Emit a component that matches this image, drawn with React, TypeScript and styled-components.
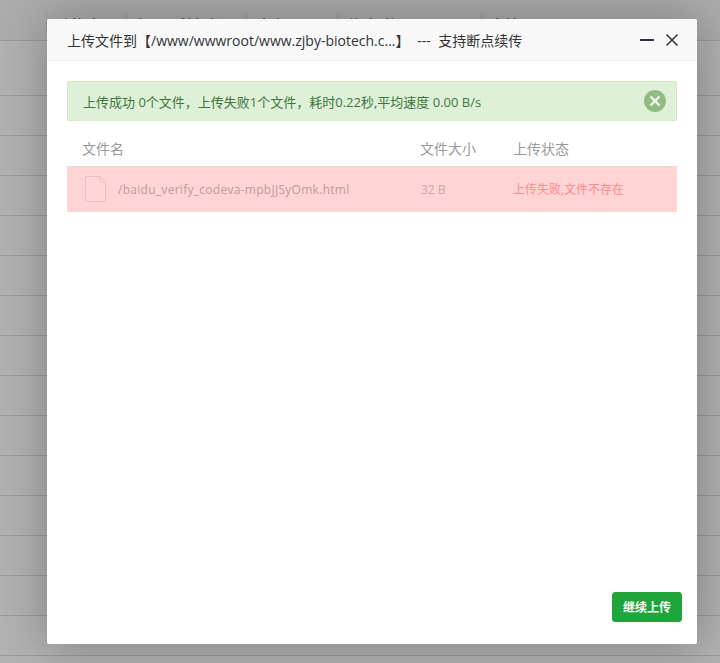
import React from "react";
import styled, { createGlobalStyle } from "styled-components";

const FONT = `"Open Sans", "Noto Sans CJK SC", sans-serif`;

const GlobalStyle = createGlobalStyle`
  html, body {
    margin: 0;
    padding: 0;
    background: #fff;
    font-family: ${FONT};
  }
`;

const backgroundColumns = [
  { label: "防篡改", width: 80 },
  { label: "权限 / 所有者", width: 120 },
  { label: "大小", width: 91 },
  { label: "修改时间", width: 144 },
  { label: "备注", width: 239 },
];

const UploadDialog: React.FC = () => (
  <Dialog>
    <DialogHeader>
      <DialogTitle>上传文件到【/www/wwwroot/www.zjby-biotech.c...】 --- 支持断点续传</DialogTitle>
      <WindowActions>
        <MinimizeIcon />
        <svg width="14" height="14" viewBox="0 0 14 14" fill="none" stroke="#2f3040" strokeWidth="1.5">
          <path d="M1.5 1.5 12.5 12.5M12.5 1.5 1.5 12.5" />
        </svg>
      </WindowActions>
    </DialogHeader>
    <DialogBody>
      <Alert>
        <span>上传成功 0个文件，上传失败1个文件，耗时0.22秒,平均速度 0.00 B/s</span>
        <AlertClose>
          <svg width="12" height="12" viewBox="0 0 12 12" fill="none" stroke="#f0f5ee" strokeWidth="2.4">
            <path d="M1.5 1.5 10.5 10.5M10.5 1.5 1.5 10.5" />
          </svg>
        </AlertClose>
      </Alert>
      <FileHead>
        <span>文件名</span>
        <span>文件大小</span>
        <span>上传状态</span>
      </FileHead>
      <FileRow>
        <FileCell>
          <svg width="22" height="26" viewBox="0 0 22 26" fill="none" stroke="#eec0c0" strokeWidth="1">
            <path d="M1.5 .5H16L21.5 6V25.5H1.5Z" fill="#ffd6d6" />
            <path d="M16 .5V6H21.5" />
          </svg>
          <FileName>/baidu_verify_codeva-mpbJJSyOmk.html</FileName>
        </FileCell>
        <FileSize>32 B</FileSize>
        <FileStatus>上传失败,文件不存在</FileStatus>
      </FileRow>
      <Footer>
        <ContinueButton>继续上传</ContinueButton>
      </Footer>
    </DialogBody>
  </Dialog>
);

const App: React.FC = () => (
  <Page>
    <GlobalStyle />
    <BackgroundHead>
      {backgroundColumns.map((col) => (
        <BackgroundCell key={col.label} style={{ width: col.width }}>
          {col.label}
        </BackgroundCell>
      ))}
    </BackgroundHead>
    {Array.from({ length: 16 }).map((_, i) => (
      <BackgroundRow key={i} />
    ))}
    <Overlay />
    <UploadDialog />
  </Page>
);

export default App;

// Styled Components

const Page = styled.div`
  position: relative;
  width: 720px;
  height: 663px;
  overflow: hidden;
  background: #fff;
`;

const BackgroundHead = styled.div`
  display: flex;
  height: 41px;
  padding: 13px 0 0 46px;
  box-sizing: border-box;
  background: #f6f6f6;
  border-bottom: 1px solid #ddd;
  margin-bottom: 15px;
`;

const BackgroundCell = styled.div`
  box-sizing: border-box;
  height: 20px;
  padding: 2px 0 0 10px;
  border-left: 1px solid #ddd;
  color: #333;
  font-size: 14px;
  line-height: 20px;
`;

const BackgroundRow = styled.div`
  height: 40px;
  box-sizing: border-box;
  border-bottom: 1px solid #ddd;
`;

const Overlay = styled.div`
  position: absolute;
  inset: 0;
  background: rgba(0, 0, 0, 0.3);
`;

const Dialog = styled.div`
  position: absolute;
  left: 47px;
  top: 19px;
  width: 650px;
  height: 625px;
  display: flex;
  flex-direction: column;
  background: #fff;
  border-radius: 2px;
  box-shadow: 1px 1px 50px rgba(0, 0, 0, 0.3);
`;

const DialogHeader = styled.div`
  flex: none;
  display: flex;
  align-items: center;
  justify-content: space-between;
  box-sizing: border-box;
  height: 42px;
  padding: 0 18px 0 20px;
  background: #f8f8f8;
  border-bottom: 1px solid #eee;
  border-radius: 2px 2px 0 0;
`;

const DialogTitle = styled.div`
  color: #333;
  font-size: 14px;
  word-spacing: 4px;
  white-space: nowrap;
`;

const WindowActions = styled.div`
  display: flex;
  align-items: center;
  gap: 11px;
`;

const MinimizeIcon = styled.div`
  width: 14px;
  height: 2px;
  background: #2f3040;
`;

const DialogBody = styled.div`
  flex: 1;
  display: flex;
  flex-direction: column;
  padding: 20px 15px 22px 20px;
`;

const Alert = styled.div`
  display: flex;
  align-items: center;
  justify-content: space-between;
  box-sizing: border-box;
  width: 610px;
  height: 40px;
  padding: 0 10px 0 15px;
  background: #dff0d8;
  border: 1px solid #d6e9c6;
  border-radius: 2px;
  color: #3c763d;
  font-size: 13px;
`;

const AlertClose = styled.div`
  display: flex;
  align-items: center;
  justify-content: center;
  width: 22px;
  height: 22px;
  border-radius: 50%;
  background: #93bc84;
`;

const FileHead = styled.div`
  display: grid;
  grid-template-columns: 338px 93px 1fr;
  align-items: center;
  box-sizing: border-box;
  width: 610px;
  height: 46px;
  padding: 8px 0 0 15px;
  border-bottom: 1px solid #ddd;
  color: #999;
  font-size: 14px;
`;

const FileRow = styled.div`
  display: grid;
  grid-template-columns: 337px 92px 1fr;
  align-items: center;
  box-sizing: border-box;
  width: 610px;
  height: 45px;
  padding-left: 17px;
  background: #ffd4d4;
  border-bottom: 1px solid #eedcdc;
  font-size: 12px;
`;

const FileCell = styled.div`
  display: flex;
  align-items: center;
`;

const FileName = styled.span`
  margin-left: 12px;
  color: #bb9c9c;
  letter-spacing: 0.28px;
`;

const FileSize = styled.div`
  color: #c9aaaa;
`;

const FileStatus = styled.div`
  color: #ff8a8a;
`;

const Footer = styled.div`
  margin-top: auto;
  display: flex;
  justify-content: flex-end;
`;

const ContinueButton = styled.button`
  width: 70px;
  height: 30px;
  padding: 0;
  border: 1px solid #20a53a;
  border-radius: 3px;
  background: #20a53a;
  color: #fff;
  font-family: ${FONT};
  font-size: 12px;
  font-weight: 700;
`;
